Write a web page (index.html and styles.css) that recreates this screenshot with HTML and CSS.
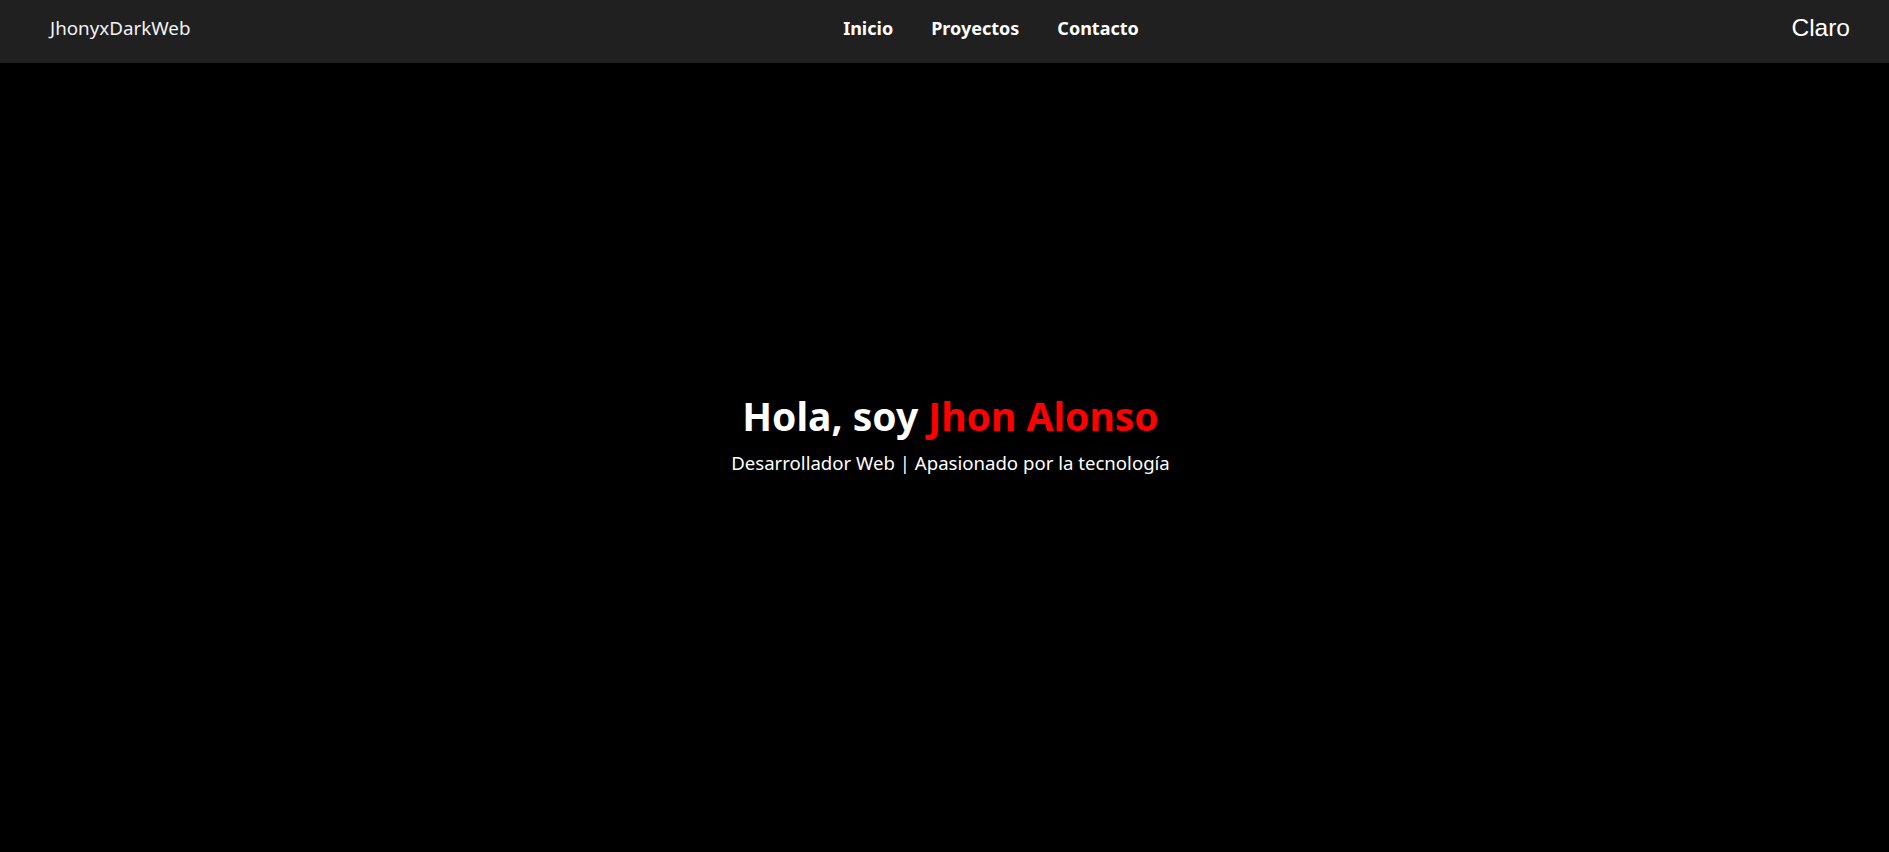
FILE: index.html
```html
<!DOCTYPE html>
<html lang="es">
<head>
<meta charset="utf-8">
<title>JhonyxDarkWeb</title>
<link rel="stylesheet" href="styles.css">
</head>
<body>
<header class="topbar">
  <div class="logo">JhonyxDarkWeb</div>
  <nav class="nav">
    <a href="#" class="nav-link">Inicio</a>
    <a href="#" class="nav-link">Proyectos</a>
    <a href="#" class="nav-link">Contacto</a>
  </nav>
  <button class="theme-btn">Claro</button>
</header>
<main class="hero">
  <h1 class="hero-title">Hola, soy <span class="accent">Jhon Alonso</span></h1>
  <p class="hero-sub">Desarrollador Web | Apasionado por la tecnología</p>
</main>
</body>
</html>
```
FILE: styles.css
```css
* { box-sizing: border-box; }
html, body { height: 100%; }
body {
  margin: 0;
  background: #000;
  color: #fff;
  font-family: "Noto Sans", "Open Sans", sans-serif;
  display: flex;
  flex-direction: column;
}
.topbar {
  height: 63px;
  flex-shrink: 0;
  background: #202020;
  display: flex;
  justify-content: space-between;
  align-items: center;
  padding: 0 39px 7px 50px;
}
.logo {
  font-size: 18.8px;
  color: #f2f2f2;
}
.nav {
  display: flex;
  gap: 38px;
}
.nav-link {
  color: #fff;
  text-decoration: none;
  font-weight: 700;
  font-size: 18px;
}
.theme-btn {
  background: none;
  border: none;
  color: #fff;
  font-family: "Liberation Sans", Arial, sans-serif;
  font-size: 24.5px;
  padding: 0;
  cursor: pointer;
}
.hero {
  flex: 1;
  display: flex;
  flex-direction: column;
  align-items: center;
  justify-content: center;
  text-align: center;
  padding: 0 0 52px 12px;
}
.hero-title {
  margin: 0;
  font-size: 39px;
  font-weight: 700;
}
.accent { color: #ff0000; }
.hero-sub {
  margin: 8px 0 0;
  font-size: 18.6px;
}
```
